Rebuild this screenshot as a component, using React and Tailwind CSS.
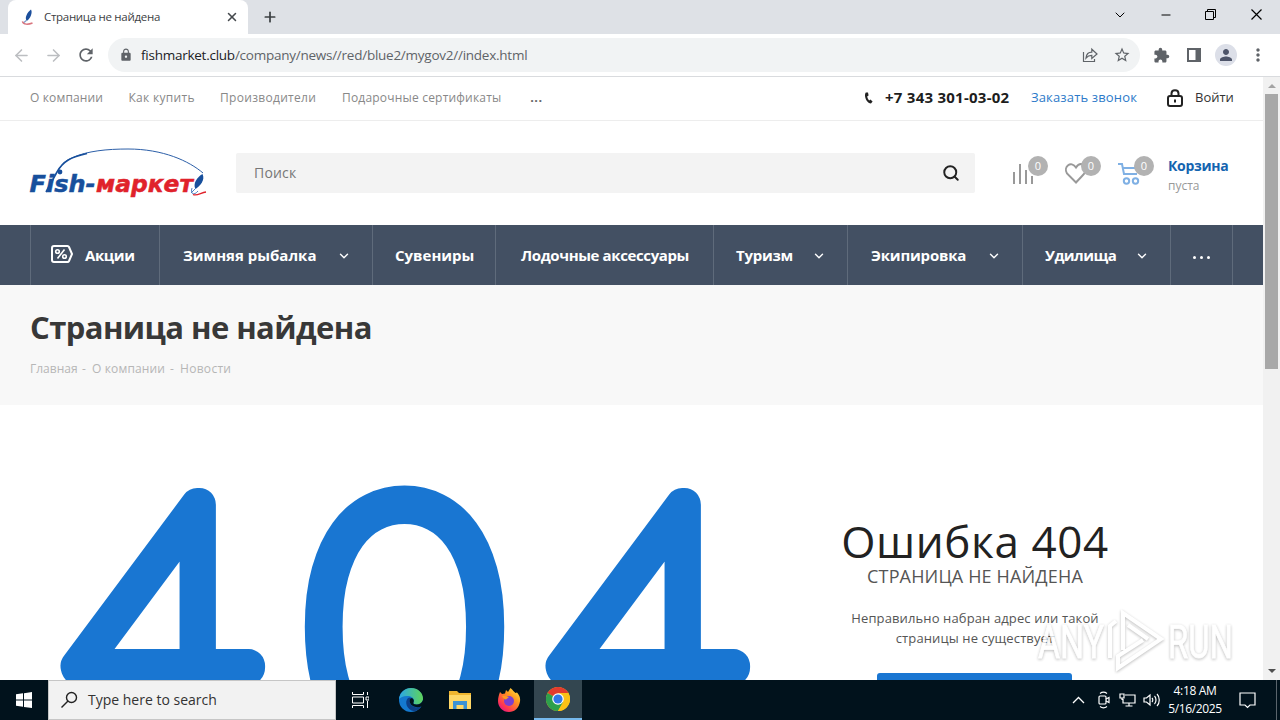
import React from 'react';
import { X, Plus, ArrowLeft, ArrowRight, Search, ChevronDown, Minus } from 'lucide-react';
import { MdRefresh, MdLock, MdStarBorder, MdExtension, MdPerson, MdMoreVert } from 'react-icons/md';

const topLinks = [
  { label: 'О компании', cls: 'w-[98.5px] tracking-[0.15px]' },
  { label: 'Как купить', cls: 'w-[91.5px] tracking-[0.3px]' },
  { label: 'Производители', cls: 'w-[122px] tracking-[0.3px]' },
  { label: 'Подарочные сертификаты', cls: 'w-[188px] tracking-[0.2px]' },
];

const menu = [
  { label: 'Зимняя рыбалка', cls: 'w-[213px] pl-[23px]', arrow: true },
  { label: 'Сувениры', cls: 'w-[123px] pl-[22px]' },
  { label: 'Лодочные аксессуары', cls: 'w-[218px] pl-[25px] tracking-[-0.38px]' },
  { label: 'Туризм', cls: 'w-[134px] pl-[22px] tracking-[-0.25px]', arrow: true },
  { label: 'Экипировка', cls: 'w-[175px] pl-[23px] tracking-[-0.2px]', arrow: true },
  { label: 'Удилища', cls: 'w-[148px] pl-[22px] tracking-[-0.55px]', arrow: true },
];

const Feather = ({ className }) => (
  <svg viewBox="0 0 16 16" className={className} fill="none">
    <path d="M11 0.5C12.6 3.5 11 8.6 6.8 12C4.2 9 7.2 3.4 11 0.5Z" fill="#1c4f9c" />
    <path d="M6.6 11.3L3 14.2" stroke="#7a9cc9" strokeWidth="1.2" />
    <path d="M2.4 12.4C3 16 8.5 15.6 12.5 14" stroke="#d9767f" strokeWidth="1.4" />
  </svg>
);

const TabStrip = () => (
  <div className="h-[34px] bg-[#dee1e6] flex">
    <div className="ml-2 w-[240px] h-full bg-white rounded-t-lg flex items-center pl-3">
      <Feather className="w-4 h-4" />
      <span className="ml-2 w-[175px] text-[11.5px] tracking-[-0.3px] text-[#3c4043]">Страница не найдена</span>
      <X size={14} strokeWidth={2.6} className="text-[#45494d] ml-1.5" />
    </div>
    <Plus size={16} strokeWidth={2.6} className="text-[#3c4043] ml-3.5 mt-[9px]" />
    <div className="ml-auto flex items-center h-[29px] text-black">
      <ChevronDown size={16} strokeWidth={1.5} className="mr-[31px]" />
      <Minus size={14} strokeWidth={1.7} className="mr-8" />
      <svg width="11" height="11" viewBox="0 0 11 11" fill="none" stroke="currentColor" className="mr-[35px]">
        <path d="M0.5 2.5H8.5V10.5H0.5ZM2.5 2.5V0.5H10.5V8.5H8.5" />
      </svg>
      <svg width="11" height="11" viewBox="0 0 11 11" stroke="currentColor" strokeWidth="1.2" className="mr-[18px]">
        <path d="M0.5 0.5L10.5 10.5M10.5 0.5L0.5 10.5" />
      </svg>
    </div>
  </div>
);

const Toolbar = () => (
  <div className="h-[43px] bg-white border-b border-[#d9dbde] flex items-center text-[#5f6368]">
    <ArrowLeft size={19} className="ml-3 text-[#bcbec1]" />
    <ArrowRight size={19} className="ml-[13px] text-[#bcbec1]" />
    <MdRefresh size={20} className="ml-[13px]" />
    <div className="ml-3 w-[1032px] h-[34px] rounded-full bg-[#f1f3f4] flex items-center pl-[11px] pr-[9px]">
      <MdLock size={14} />
      <span className="ml-2 text-[13.5px] tracking-[-0.25px]">
        <span className="text-[#202124]">fishmarket.club</span>/company/news//red/blue2/mygov2//index.html
      </span>
      <svg width="16" height="16" viewBox="0 0 16 16" fill="none" stroke="currentColor" strokeWidth="1.2" className="ml-auto">
        <path d="M1.5 5V14.5H12.5V12M4 11C4.4 7.5 6.5 5.2 9.8 5.2V2.2L15 7L9.8 11.5V8.4C7.5 8.4 5.5 9.2 4 11Z" />
      </svg>
      <MdStarBorder size={18} className="ml-[15px]" />
    </div>
    <MdExtension size={17} className="ml-[13px]" />
    <svg width="14" height="14" viewBox="0 0 14 14" className="ml-[17px]">
      <path d="M1 1H13V13H1Z" fill="none" stroke="currentColor" strokeWidth="2" />
      <path d="M8.5 1H13V13H8.5Z" fill="currentColor" />
    </svg>
    <span className="ml-[14px] w-[22px] h-[22px] rounded-full bg-[#dcdfe8] flex items-center justify-center">
      <MdPerson size={18} className="text-[#4d5469]" />
    </span>
    <MdMoreVert size={20} className="ml-[11px]" />
  </div>
);

const TopBar = () => (
  <div className="h-[44px] border-b border-[#ededed] flex items-center pl-[30px] pb-[2px] text-[12px] text-[#888]">
    {topLinks.map((link) => (
      <span key={link.label} className={`whitespace-nowrap ${link.cls}`}>{link.label}</span>
    ))}
    <span className="w-3 text-[15px] leading-5 font-semibold text-[#666] pb-[3px]">...</span>
    <svg width="9" height="12" viewBox="0 0 9 12" className="ml-[322px]">
      <path d="M1.8 0.6C-0.6 3.5 2.6 11.6 7 11.6L8.6 9.6L6.4 7.6L5.2 8.5C4 7.4 3.3 5.8 3.3 4.3L4.6 3.6L4 0.6Z" fill="#222" />
    </svg>
    <span className="ml-[12px] w-[146px] text-[15px] tracking-[0.25px] font-bold text-[#1d1d1d]">+7 343 301-03-02</span>
    <span className="w-[136px] text-[13px] tracking-[0.15px] text-[#2d7ac9]">Заказать звонок</span>
    <svg width="16" height="18" viewBox="0 0 16 18" fill="none" stroke="#222" strokeWidth="2">
      <rect x="1" y="7" width="14" height="10" rx="2" />
      <path d="M4.5 7V4.5C4.5 0 11.5 0 11.5 4.5V7M8 10.5V13.5" />
    </svg>
    <span className="ml-3 text-[13px] text-[#333]">Войти</span>
  </div>
);

const Logo = () => (
  <svg width="180" height="52" viewBox="0 0 180 52" fill="none">
    <g fontFamily="DejaVu Sans" fontSize="23" fontWeight="bold" fontStyle="italic">
      <text x="0.5" y="45" fill="#174f9c" stroke="#174f9c" strokeWidth="0.5" textLength="66" lengthAdjust="spacingAndGlyphs">Fish-</text>
      <text x="67" y="45" fill="#e0222b" stroke="#e0222b" strokeWidth="0.5" textLength="97" lengthAdjust="spacingAndGlyphs">маркет</text>
    </g>
    <path d="M29 24C33 16 38 13 44 10.5C58 4 78 2 99 2C134 2 160 14 174 26" stroke="#2c5fa8" strokeWidth="1" />
    <path d="M17 45L28 25C34 14 42 10 58 6.5" stroke="#174f9c" strokeWidth="1.6" />
    <circle cx="31" cy="25" r="2.4" fill="#174f9c" />
    <path d="M173.5 27C176.5 33 171 39 166.5 42C163.5 37 168 30 173.5 27Z" fill="#174f9c" />
    <path d="M163 41C161 47 165 49 169 44M167 41L162 46" stroke="#4f7fc0" />
    <path d="M164 47.5C168 49.5 172 45.5 177 45" stroke="#e0222b" strokeWidth="1.3" />
  </svg>
);

const Counter = ({ className, children }) => (
  <div className={`relative h-[34px] ${className}`}>
    {children}
    <span className="absolute left-[17px] top-0 w-5 h-5 rounded-full bg-[#b2b2b2] text-white text-[11px] flex items-center justify-center">0</span>
  </div>
);

const Header = () => (
  <div className="h-[104px] flex items-center pl-[29px]">
    <Logo />
    <div className="ml-[27px] w-[739px] h-10 rounded-[2px] bg-[#f3f3f3] flex items-center pl-[18px] pr-[15px]">
      <span className="text-[14px] leading-5 tracking-[0.2px] text-[#777]">Поиск</span>
      <Search size={18} strokeWidth={2.6} className="ml-auto text-[#222]" />
    </div>
    <Counter className="ml-[36px] w-[53px]">
      <svg width="22" height="32" viewBox="0 0 22 32" stroke="#999" strokeWidth="2">
        <path d="M3 16V28M9 8V28M15 14V28M21 20V28" />
      </svg>
    </Counter>
    <Counter className="w-[53px]">
      <svg width="24" height="32" viewBox="0 0 24 32" fill="none" stroke="#999" strokeWidth="2">
        <path d="M12 26.5L3 17.5C-1 11 7 4 12 11.5C16 5 24 9 22 15C21.5 17 18 20 12 26.5Z" />
      </svg>
    </Counter>
    <Counter className="w-[51px]">
      <svg width="24" height="32" viewBox="0 0 24 32" fill="none" stroke="#7fb0e4" strokeWidth="2">
        <path d="M1 8H5L7 18H20M6 12H21" />
        <circle cx="9.5" cy="25" r="2.7" />
        <circle cx="18.5" cy="25" r="2.7" />
      </svg>
    </Counter>
    <div className="flex flex-col pt-[5px]">
      <span className="text-[14px] leading-5 tracking-[-0.3px] font-bold text-[#1464b0]">Корзина</span>
      <span className="text-[12px] leading-5 text-[#999]">пуста</span>
    </div>
  </div>
);

const Menu = () => (
  <div className="h-[60px] bg-[#435063] flex pl-[30px] text-[15px] font-bold text-white">
    <div className="w-[129px] border-l border-[#5f6b7b] flex items-center pl-5">
      <svg width="22" height="20" viewBox="0 0 22 20" fill="none" stroke="currentColor" strokeWidth="2" className="mb-[3px]">
        <path d="M3 2H16.5Q17.5 2 18 3L21 10L18 17Q17.5 18 16.5 18H3Q1 18 1 16V4Q1 2 3 2Z" />
        <path d="M13.5 5.5L6.5 14.5" strokeWidth="1.6" />
        <circle cx="6.5" cy="7.5" r="1.8" strokeWidth="1.6" />
        <circle cx="13.5" cy="12.5" r="1.8" strokeWidth="1.6" />
      </svg>
      <span className="ml-3 tracking-[-0.4px]">Акции</span>
    </div>
    {menu.map((item) => (
      <div key={item.label} className={`border-l border-[#5f6b7b] flex items-center whitespace-nowrap ${item.cls}`}>
        {item.label}
        {item.arrow && <ChevronDown size={14} strokeWidth={2.4} className="ml-auto mr-[21px] mt-px" />}
      </div>
    ))}
    <div className="w-[63px] border-x border-[#5f6b7b] flex items-center justify-center gap-1 pt-[5px]">
      <span className="w-[3px] h-[3px] rounded-full bg-white" />
      <span className="w-[3px] h-[3px] rounded-full bg-white" />
      <span className="w-[3px] h-[3px] rounded-full bg-white" />
    </div>
  </div>
);

const PageTitle = () => (
  <div className="h-[120px] bg-[#f8f8f8] pl-[30px] pt-5">
    <h1 className="text-[31px] leading-[44px] tracking-[-0.58px] font-bold text-[#383838] whitespace-nowrap">Страница не найдена</h1>
    <div className="mt-[10px] flex text-[12px] leading-5 text-[#b6b6b6]">
      <span className="w-[52px]">Главная</span>
      <span className="w-[10px]">-</span>
      <span className="w-[78px] tracking-[0.15px]">О компании</span>
      <span className="w-[10px]">-</span>
      <span className="tracking-[0.3px]">Новости</span>
    </div>
  </div>
);

const NotFound = () => (
  <div className="h-[275px] flex overflow-hidden">
    <svg width="800" height="275" viewBox="0 405 800 275" className="shrink-0">
      <g fill="#1976d2" stroke="#1976d2" strokeWidth="33" strokeLinejoin="round" fontFamily="Lato" fontWeight="100">
        <text transform="translate(67.5 742.5) scale(0.99 1.01)" fontSize="336">4</text>
        <text transform="translate(404.5 748) scale(0.965 1)" textAnchor="middle" fontSize="346" strokeWidth="35">0</text>
        <text transform="translate(552.5 742.5) scale(0.99 1.01)" fontSize="336">4</text>
      </g>
    </svg>
    <div className="w-[350px] pt-[113px] flex flex-col items-center text-center">
      <p className="text-[44px] leading-[46px] tracking-[0.6px] text-[#222]">Ошибка 404</p>
      <p className="mt-0.5 text-[18px] leading-5 tracking-[0.15px] text-[#555] uppercase">Страница не найдена</p>
      <p className="mt-[22px] text-[13px] leading-5 tracking-[0.12px] text-[#555]">
        Неправильно набран адрес или такой
        <br />
        страницы не существует
      </p>
      <button className="mt-[25px] mr-0.5 w-[195px] h-10 shrink-0 rounded-[3px] bg-[#1976d2]" />
    </div>
  </div>
);

const Scrollbar = () => (
  <div className="w-[17px] bg-[#f1f1f1] flex flex-col items-center">
    <span className="mt-[7px] border-x-4 border-x-transparent border-b-4 border-b-[#a3a3a3]" />
    <span className="mt-1.5 w-[13px] h-[275px] bg-[#a8a8a8]" />
    <span className="mt-auto mb-[7px] border-x-4 border-x-transparent border-t-4 border-t-[#505050]" />
  </div>
);

const Watermark = () => (
  <div className="absolute left-[1036px] top-[608px] opacity-80">
    <svg width="200" height="66" viewBox="0 0 200 66" fill="none" stroke="#fff" strokeWidth="4" className="[filter:drop-shadow(0_1px_1.5px_#0005)]">
      <g fontFamily="Roboto" fontSize="46" fill="#fff" strokeWidth="0.8">
        <text x="2" y="50" textLength="66" lengthAdjust="spacingAndGlyphs">ANY</text>
        <text x="132" y="50" textLength="65" lengthAdjust="spacingAndGlyphs">RUN</text>
      </g>
      <path d="M74 50V18L80 13M87 42V5L125 31L82 60V48L107 32M92 17L112 31" />
    </svg>
  </div>
);

const EdgeIcon = () => (
  <svg width="24" height="24" viewBox="0 0 24 24">
    <defs>
      <linearGradient id="edgeTop" x1="0" x2="1">
        <stop offset="0" stopColor="#2aa7e8" />
        <stop offset="1" stopColor="#5fd45a" />
      </linearGradient>
    </defs>
    <circle cx="12" cy="12" r="12" fill="#1479cf" />
    <path d="M0 11C1 4 6 0 12 0C19 0 24 5 24 10.5C24 14.5 20.5 16.5 17.5 16.5C15 16.5 14 15.5 14.5 14.5C16 12 14 8.5 9.5 8C5 7.5 1.5 9 0 11Z" fill="url(#edgeTop)" />
    <path d="M9 10C5 14 8 22 15 23.3C18 22.8 20.5 21.5 22.5 18.5C18 20.5 11 19 10.5 13C10.5 11.5 11.5 10.5 12.5 10C11.5 9.2 10 9.2 9 10Z" fill="#0d3f87" />
    <path d="M14.5 14.5C14 15.5 15 16.5 17.5 16.5C20 16.5 23 15 24 12V17L22.5 18.500C17 20.500 11 18 10.5 13C10.5 11 12 10 13 10C15 11 15.2 13 14.5 14.5Z" fill="#01121c" />
  </svg>
);

const FirefoxIcon = () => (
  <svg width="24" height="24" viewBox="0 0 24 24">
    <defs>
      <linearGradient id="fox" x1="1" y1="0" x2="0.2" y2="1">
        <stop offset="0" stopColor="#fff04a" />
        <stop offset="0.4" stopColor="#ff9a1f" />
        <stop offset="0.8" stopColor="#ff3850" />
        <stop offset="1" stopColor="#e31587" />
      </linearGradient>
    </defs>
    <path d="M3 4L5 6L8 5.5L9 2L11 4L13.5 0C16 2 17 4 18.5 5L20 4.5C22.5 7 23.5 10 23 13.5C22 20 17.5 24 12 24C5.5 24 1 19 1 13C1 9.5 2 6.5 3 4Z" fill="url(#fox)" />
    <circle cx="12" cy="13" r="5" fill="#7b3fd1" />
    <path d="M5 8C8 7 10 8.5 12 9L9 11.5C7.5 11.5 6 10 5 8Z" fill="#ff9a1f" />
  </svg>
);

const ChromeIcon = () => (
  <svg width="24" height="24" viewBox="0 0 24 24">
    <circle cx="12" cy="12" r="12" fill="#fbc116" />
    <path d="M12 12L1.6 6A12 12 0 0 1 22.4 6Z" fill="#e33b2e" />
    <path d="M12 12L1.6 6A12 12 0 0 0 12 24L17.2 15Z" fill="#2da04c" />
    <path d="M12 6H22.4A12 12 0 0 1 12 24L17.2 15Z" fill="#fbc116" />
    <circle cx="12" cy="12" r="5.8" fill="#fff" />
    <circle cx="12" cy="12" r="4.6" fill="#3178e8" />
  </svg>
);

const Taskbar = () => (
  <div className="h-10 bg-[#01121c] flex items-center text-white">
    <div className="w-12 flex justify-center">
      <svg width="16" height="16" viewBox="0 0 16 16" fill="currentColor">
        <path d="M0 2.3L7 1.3V7.6H0ZM8 1.2L16 0V7.6H8ZM0 8.5H7V14.8L0 13.8ZM8 8.5H16V16L8 14.9Z" />
      </svg>
    </div>
    <div className="w-[288px] h-full bg-[#f2f2f2] border border-[#c6c6c6] flex items-center pl-[11px] text-[#222]">
      <svg width="18" height="18" viewBox="0 0 18 18" fill="none" stroke="currentColor" strokeWidth="1.4">
        <circle cx="11.5" cy="6.5" r="5" />
        <path d="M8 10L1.5 16.5" />
      </svg>
      <span className="ml-[10px] text-[14px] leading-5 text-[#333]">Type here to search</span>
    </div>
    <div className="w-12 flex justify-center">
      <svg width="17" height="16" viewBox="0 0 17 16" fill="none" stroke="currentColor">
        <path d="M0.5 0V2.5H11.5V0M0.5 16V13.5H11.5V16M0.5 5H11.5V11H0.5ZM15.5 0V3M15.5 9V16M14 5H17V8H14Z" />
      </svg>
    </div>
    <div className="ml-[3px] w-12 flex justify-center"><EdgeIcon /></div>
    <div className="w-[49px] flex justify-center">
      <svg width="22" height="20" viewBox="0 0 22 20">
        <path d="M0 1H8L10 3H22V19H0Z" fill="#f0b62f" />
        <path d="M0 5H22V19H0Z" fill="#ffd867" />
        <path d="M4 19V11H18V19H14.5V15H7.5V19Z" fill="#3b93d6" />
      </svg>
    </div>
    <div className="w-[50px] flex justify-center"><FirefoxIcon /></div>
    <div className="w-12 h-full bg-[#334650] border-b-2 border-[#76b9ed] flex justify-center items-center"><ChromeIcon /></div>
    <svg width="13" height="8" viewBox="0 0 13 8" fill="none" stroke="currentColor" strokeWidth="1.3" className="ml-auto">
      <path d="M1 7L6.5 1.5L12 7" />
    </svg>
    <svg width="14" height="18" viewBox="0 0 14 18" fill="none" stroke="currentColor" strokeWidth="1.2" className="ml-[12px]">
      <rect x="2" y="5" width="7" height="8" rx="1" />
      <path d="M9 8L12 6.5V11.5L9 10M3 2.5C5 1 8 1 10 2.5M3 15.5C5 17 8 17 10 15.5" />
    </svg>
    <svg width="17" height="14" viewBox="0 0 17 14" fill="none" stroke="currentColor" strokeWidth="1.2" className="ml-[8px]">
      <path d="M6 2H16V10H4V6M10 10V13M6.5 13H13.5M1 1H5V5H1ZM3 5V7" />
    </svg>
    <svg width="17" height="14" viewBox="0 0 17 14" fill="none" stroke="currentColor" strokeWidth="1.2" className="ml-[7px]">
      <path d="M1 5H3.5L7 2V12L3.5 9H1ZM9 5C10 6 10 8 9 9M11.5 3C13.5 5 13.5 9 11.5 11M14 1C17 4 17 10 14 13" />
    </svg>
    <div className="w-[70px] text-center text-[12px] leading-[18px] tracking-[-0.35px]">
      <div>4:18 AM</div>
      <div>5/16/2025</div>
    </div>
    <svg width="17" height="17" viewBox="0 0 17 17" fill="none" stroke="currentColor" strokeWidth="1.2" className="ml-[9px] mr-[20px]">
      <path d="M1 1H16V13H11L8.5 15.5L6 13H1Z" />
    </svg>
    <div className="w-1 h-full border-l border-[#5a646c]" />
  </div>
);

const App = () => {
  return (
    <div className="relative w-[1280px] h-[720px] overflow-hidden bg-white flex flex-col font-['Open_Sans','Noto_Sans',sans-serif]">
      <TabStrip />
      <Toolbar />
      <div className="h-[603px] flex">
        <div className="w-[1263px]">
          <TopBar />
          <Header />
          <Menu />
          <PageTitle />
          <NotFound />
        </div>
        <Scrollbar />
      </div>
      <Taskbar />
      <Watermark />
    </div>
  );
};

export default App;
